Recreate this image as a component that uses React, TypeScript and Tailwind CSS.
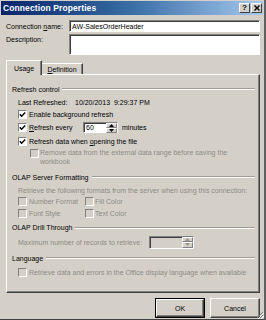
import React from "react";

const sunken =
  "border border-t-[#808080] border-l-[#808080] border-r-white border-b-white";

function Check({ checked = false, disabled = false }: { checked?: boolean; disabled?: boolean }) {
  return (
    <span
      className={`relative flex items-center justify-center w-[9px] h-[9px] shrink-0 ${sunken} ${
        disabled ? "bg-[#d4d0c8]" : "bg-white"
      }`}
    >
      {checked && (
        <svg width="7" height="7" viewBox="0 0 7 7" className="block">
          <polyline points="0.8,3.2 2.6,5.2 6.2,1.4" fill="none" stroke="#000" strokeWidth="1.4" />
        </svg>
      )}
    </span>
  );
}

function SpinBtns({ disabled = false }: { disabled?: boolean }) {
  const c = disabled ? "#9a978f" : "#000";
  return (
    <div className="flex flex-col w-[11px] h-full">
      <div className="flex-1 flex items-center justify-center bg-[#d4d0c8] border border-t-white border-l-white border-r-[#808080] border-b-[#808080]">
        <svg width="5" height="3" viewBox="0 0 5 3">
          <polygon points="2.5,0 5,3 0,3" fill={c} />
        </svg>
      </div>
      <div className="flex-1 flex items-center justify-center bg-[#d4d0c8] border border-t-white border-l-white border-r-[#808080] border-b-[#808080]">
        <svg width="5" height="3" viewBox="0 0 5 3">
          <polygon points="0,0 5,0 2.5,3" fill={c} />
        </svg>
      </div>
    </div>
  );
}

function Group({ label, h }: { label: string; h: string }) {
  return (
    <div className={`flex items-center pl-[5px] pr-[4px] ${h}`}>
      <span className="whitespace-nowrap">{label}</span>
      <div className="flex-1 ml-[3px] h-[2px] border-t border-t-[#a09c94] border-b border-b-white" />
    </div>
  );
}

const dis = "text-[#8e8b85]";

export default function App() {
  return (
    <div className="w-[266px] h-[320px] bg-[#d4d0c8] flex flex-col border-r-2 border-r-[#606060] border-b border-b-[#404040] relative font-['Liberation_Sans',Arial,sans-serif] text-[7px] leading-none text-black overflow-hidden">
      {/* Title bar */}
      <div className="mt-[1px] ml-[1px] mr-[1px] h-[14px] flex items-center bg-gradient-to-r from-[#0a246a] via-[#3a6ea5] to-[#a6caf0]">
        <span className="pl-[2px] text-white font-bold text-[8.5px] tracking-[0.1px]">Connection Properties</span>
        <div className="ml-auto flex gap-[1px] mr-[1px]">
          <div className="w-[11px] h-[10px] bg-[#d4d0c8] border border-t-white border-l-white border-r-[#404040] border-b-[#404040] flex items-center justify-center text-[8px] font-bold leading-none">
            ?
          </div>
          <div className="w-[11px] h-[10px] bg-[#d4d0c8] border border-t-white border-l-white border-r-[#404040] border-b-[#404040] flex items-center justify-center">
            <svg width="6" height="6" viewBox="0 0 6 6">
              <path d="M0.5 0.5 L5.5 5.5 M5.5 0.5 L0.5 5.5" stroke="#000" strokeWidth="1.4" />
            </svg>
          </div>
        </div>
      </div>

      {/* Connection name */}
      <div className="mt-[5px] flex items-center pl-[6px] h-[12px]">
        <span className="w-[63px]">
          Connection <span className="underline">n</span>ame:
        </span>
        <div className={`w-[191px] h-[12px] bg-white ${sunken} shadow-[inset_1px_1px_0_#404040] flex items-center pl-[2px]`}>
          AW-SalesOrderHeader
        </div>
      </div>

      {/* Description */}
      <div className="mt-[2px] flex items-start pl-[6px] h-[21px]">
        <span className="w-[63px] pt-[2px]">Description:</span>
        <div className={`w-[191px] h-[21px] bg-white ${sunken} shadow-[inset_1px_1px_0_#404040]`} />
      </div>

      {/* Tabs */}
      <div className="mt-[5px] ml-[6px] flex items-end h-[14px]">
        <div className="relative z-10 w-[36px] h-[15px] -mb-[1px] bg-[#d4d0c8] border-t border-l border-t-white border-l-white border-r border-r-[#404040] shadow-[inset_-1px_0_0_#808080] flex items-start justify-center pt-[4px]">
          Usage
        </div>
        <div className="w-[41px] h-[11px] bg-[#d4d0c8] border-t border-t-white border-r border-r-[#404040] shadow-[inset_-1px_0_0_#808080] flex items-start justify-center pt-[2px]">
          <span>
            <span className="underline">D</span>efinition
          </span>
        </div>
      </div>

      {/* Panel */}
      <div className="ml-[6px] w-[254px] h-[219px] border-t border-l border-t-white border-l-white border-r border-b border-r-[#404040] border-b-[#404040] shadow-[inset_-1px_-1px_0_#808080] flex flex-col pt-[7px]">
        <Group label="Refresh control" h="h-[14px]" />
        <div className="h-[13px] flex items-center pl-[11px]">
          <span className="w-[57px]">Last Refreshed:</span>
          <span>10/20/2013&nbsp;&nbsp;9:29:37 PM</span>
        </div>
        <div className="h-[10px] flex items-center pl-[11px]">
          <Check checked />
          <span className="ml-[2px]">Enable background refresh</span>
        </div>
        <div className="h-[16px] flex items-center pl-[11px]">
          <Check checked />
          <span className="ml-[2px] w-[54px]">
            <span className="underline">R</span>efresh every
          </span>
          <div className={`w-[35px] h-[11px] bg-white ${sunken} shadow-[inset_1px_1px_0_#404040] flex`}>
            <span className="flex-1 pl-[2px] flex items-center">60</span>
            <SpinBtns />
          </div>
          <span className="ml-[4px]">minutes</span>
        </div>
        <div className="h-[13px] flex items-center pl-[11px]">
          <Check checked />
          <span className="ml-[2px]">
            Refresh data when <span className="underline">o</span>pening the file
          </span>
        </div>
        <div className="h-[22px] flex items-start pl-[23px]">
          <div className="mt-[1px]">
            <Check disabled />
          </div>
          <span className={`ml-[1px] leading-[9px] ${dis}`}>
            Remove data from the external data range before saving the
            <br />
            workbook
          </span>
        </div>
        <Group label="OLAP Server Formatting" h="h-[14px]" />
        <div className={`h-[12px] flex items-center pl-[11px] ${dis}`}>
          Retrieve the following formats from the server when using this connection:
        </div>
        <div className={`h-[10px] flex items-center pl-[11px] ${dis}`}>
          <div className="w-[67px] flex items-center">
            <Check disabled />
            <span className="ml-[2px]">Number Format</span>
          </div>
          <Check disabled />
          <span className="ml-[1px]">Fill Color</span>
        </div>
        <div className={`h-[14px] flex items-center pl-[11px] ${dis}`}>
          <div className="w-[67px] flex items-center">
            <Check disabled />
            <span className="ml-[2px]">Font Style</span>
          </div>
          <Check disabled />
          <span className="ml-[1px]">Text Color</span>
        </div>
        <Group label="OLAP Drill Through" h="h-[15px]" />
        <div className={`h-[14px] flex items-center pl-[11px] ${dis}`}>
          <span className="w-[131px]">Maximum number of records to retrieve:</span>
          <div className={`w-[45px] h-[13px] bg-[#d4d0c8] border border-t-[#808080] border-l-[#808080] border-r-white border-b-white shadow-[inset_1px_1px_0_#404040] flex`}>
            <span className="flex-1" />
            <SpinBtns disabled />
          </div>
        </div>
        <Group label="Language" h="h-[18px]" />
        <div className={`h-[10px] flex items-center pl-[11px] ${dis}`}>
          <Check disabled />
          <span className="ml-[2px]">Retrieve data and errors in the Office display language when available</span>
        </div>
      </div>

      {/* Buttons */}
      <div className="mt-[5px] flex justify-end gap-[5px] pr-[4px]">
        <div className="w-[50px] h-[20px] border border-black bg-[#d4d0c8] flex">
          <div className="flex-1 flex items-center justify-center border border-t-white border-l-white border-r-[#404040] border-b-[#404040] shadow-[inset_-1px_-1px_0_#808080]">
            OK
          </div>
        </div>
        <div className="w-[50px] h-[20px] bg-[#d4d0c8] flex items-center justify-center border border-t-white border-l-white border-r-[#404040] border-b-[#404040] shadow-[inset_-1px_-1px_0_#808080]">
          Cancel
        </div>
      </div>

      {/* size grip */}
      <svg width="8" height="8" viewBox="0 0 8 8" className="absolute right-0 bottom-0">
        <path d="M7 1 L1 7 M7 4 L4 7" stroke="#808080" strokeWidth="1" />
        <path d="M8 2 L2 8 M8 5 L5 8" stroke="#ffffff" strokeWidth="1" />
      </svg>
    </div>
  );
}
